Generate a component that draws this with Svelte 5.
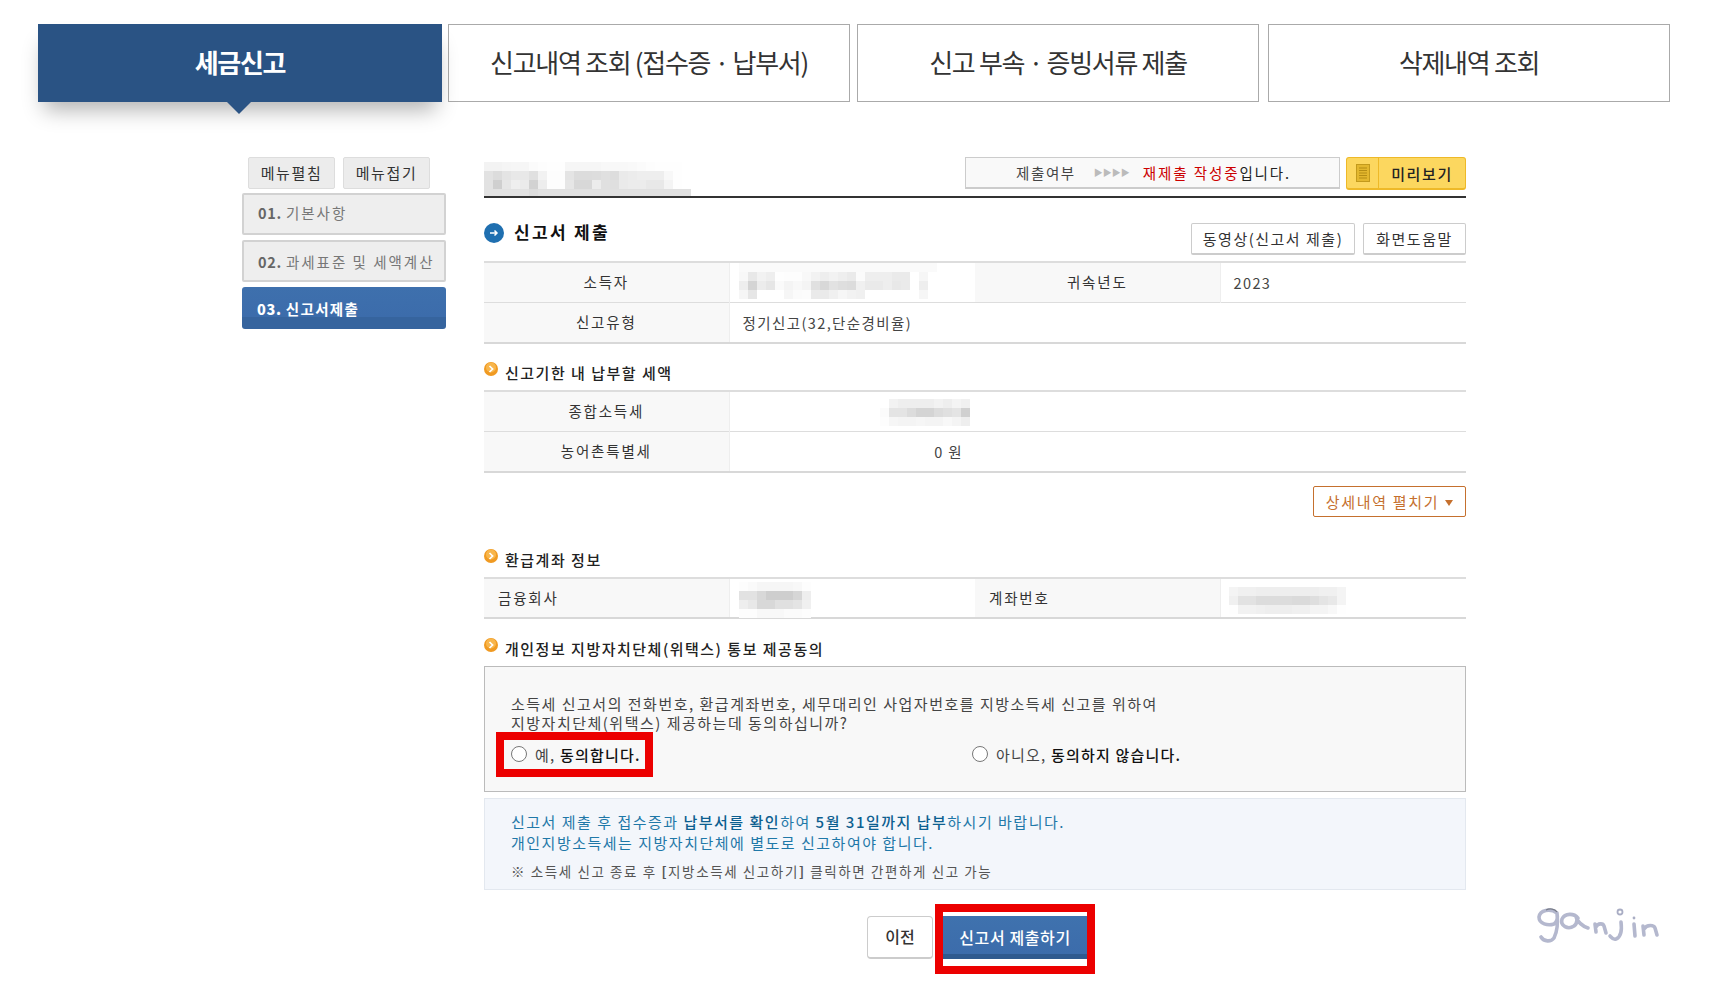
<script>
    const blurs = {
        title: [
            ['f3','f3','f5','f6','f6','fb','fd','fe','fe','f6','f6','f6','f6','f8','f8','f8','f9','fb','fd','fe','fe','fe','ff'],
            ['e2','dc','e4','e8','e8','e0','f2','fd','fd','e4','dc','dc','dd','e0','dd','ea','ec','ee','ee','ee','f8','fe','ff'],
            ['e2','cf','e6','ef','eb','d2','ed','fd','fd','e6','d8','d8','ec','e0','df','ea','ec','ec','e8','e8','f4','fe','ff'],
            ['e2','e2','e2','e2','e2','dc','e0','e0','e0','e0','e0','e0','e0','e0','e0','e0','e0','e0','e0','e0','e0','e0','e0']
        ],
        payer: [
            ['fa','fa','fa','fa','fa','fa','fa','fa','fa','fa','fa','fa','fa','fa','fa','fa','fa','fa','fa','fa','fa','fa'],
            ['f8','e8','f2','ee','fe','fd','fd','f8','f2','ee','f2','ee','ea','fb','ee','ee','ee','ea','ea','ff','f6','ff'],
            ['ee','d4','ec','e6','fa','f4','f8','f4','e0','d8','e2','de','dc','f0','ea','ea','ee','e8','ea','ff','ee','ff'],
            ['f6','e6','ff','ff','ff','f6','fb','fc','ea','ea','f0','f6','f2','f0','ff','ff','ff','ff','ff','ff','f6','ff']
        ],
        tax: [
            ['ff','f2','ee','ee','ee','ee','f2','ee','f4','f0'],
            ['fb','e4','e4','dc','d4','d4','dc','e0','e4','d0'],
            ['fd','f6','f4','f4','f6','f4','f4','f8','f4','ee']
        ],
        bank: [
            ['fd','fa','f6','f6','f6','f6','f8','fd'],
            ['e2','e2','d8','ce','ce','ce','d6','ee'],
            ['ee','e8','d8','d8','e0','e0','e4','f0'],
            ['fd','fd','f8','f8','f8','fb','fb','fd']
        ],
        account: [
            ['f4','f0','f0','ee','ee','ee','ee','ee','ee','ee','f0','f0','f4'],
            ['f0','e2','e2','dc','dc','dc','dc','da','da','de','e4','e8','f4'],
            ['fe','f2','f2','f0','ee','ee','ee','f0','f0','f4','f4','f8','fe']
        ]
    };
</script>

{#snippet mosaic(rows, kind)}
    <div class="mosaic {kind}" aria-hidden="true">
        {#each rows as row}
            <div class="mosaic-row">
                {#each row as g}
                    <i style="background:#{g}{g}{g}"></i>
                {/each}
            </div>
        {/each}
    </div>
{/snippet}

{#snippet bullet()}
    <svg class="bullet" viewBox="0 0 14 14" aria-hidden="true">
        <circle cx="7" cy="7" r="7" fill="#f09a22"/>
        <circle cx="7" cy="5.5" r="5" fill="#f8b64c"/>
        <path d="M5.5 4 L8.6 7 L5.5 10" fill="none" stroke="#fff" stroke-width="1.7"/>
    </svg>
{/snippet}

<main class="page">
    <nav class="tabs">
        <a class="tab active">세금신고</a>
        <a class="tab second">신고내역 조회 (접수증 · 납부서)</a>
        <a class="tab third">신고 부속 · 증빙서류 제출</a>
        <a class="tab fourth">삭제내역 조회</a>
    </nav>

    <div class="layout">
        <aside class="sidebar">
            <div class="menu-btns">
                <button>메뉴펼침</button>
                <button>메뉴접기</button>
            </div>
            <div class="side-item"><b>01.</b> 기본사항</div>
            <div class="side-item"><b>02.</b> 과세표준 및 세액계산</div>
            <div class="side-item current"><b>03.</b> 신고서제출</div>
        </aside>

        <section class="content">
            <div class="top-row">
                {@render mosaic(blurs.title, 'm-title')}
                <div class="status">
                    <span>제출여부</span>
                    <span class="arrows">▶▶▶▶</span>
                    <span class="state"><em>재제출 작성중</em>입니다.</span>
                </div>
                <button class="preview">
                    <span class="preview-icon">
                        <svg viewBox="0 0 14 18" width="14" height="18" aria-hidden="true">
                            <rect x="0.5" y="0.5" width="13" height="17" fill="#e3b72e" stroke="#c39a1c"/>
                            <path d="M3 4h8M3 6.5h8M3 9h8M3 11.5h8M3 14h8" stroke="#b58d14" stroke-width="1"/>
                        </svg>
                    </span>
                    <span class="preview-label">미리보기</span>
                </button>
            </div>

            <div class="main-head">
                <h2>
                    <svg viewBox="0 0 20 20" width="20" height="20" aria-hidden="true">
                        <circle cx="10" cy="10" r="10" fill="#1f6fb0"/>
                        <path d="M6 10h7M10.5 7.5 13 10l-2.500 2.500" fill="none" stroke="#fff" stroke-width="1.500"/>
                    </svg>
                    <span>신고서 제출</span>
                </h2>
                <div class="head-btns">
                    <button class="plain">동영상(신고서 제출)</button>
                    <button class="plain">화면도움말</button>
                </div>
            </div>

            <table>
                <colgroup><col class="c1"/><col class="c2"/><col class="c3"/><col class="c4"/></colgroup>
                <tbody>
                    <tr>
                        <th>소득자</th>
                        <td class="has-blur">{@render mosaic(blurs.payer, 'm-payer')}</td>
                        <th>귀속년도</th>
                        <td>2023</td>
                    </tr>
                    <tr>
                        <th>신고유형</th>
                        <td colspan="3">정기신고(32,단순경비율)</td>
                    </tr>
                </tbody>
            </table>

            <h3 class="sub due">{@render bullet()}<span>신고기한 내 납부할 세액</span></h3>
            <table>
                <colgroup><col class="c1"/><col class="c2"/><col class="c3"/><col class="c4"/></colgroup>
                <tbody>
                    <tr>
                        <th>종합소득세</th>
                        <td class="has-blur">{@render mosaic(blurs.tax, 'm-tax')}</td>
                        <td colspan="2"></td>
                    </tr>
                    <tr>
                        <th>농어촌특별세</th>
                        <td class="amount">0 원</td>
                        <td colspan="2"></td>
                    </tr>
                </tbody>
            </table>

            <div class="detail-row">
                <button class="detail">상세내역 펼치기 <i class="caret"></i></button>
            </div>

            <h3 class="sub refund">{@render bullet()}<span>환급계좌 정보</span></h3>
            <table>
                <colgroup><col class="c1"/><col class="c2"/><col class="c3"/><col class="c4"/></colgroup>
                <tbody>
                    <tr>
                        <th class="left">금융회사</th>
                        <td class="has-blur">{@render mosaic(blurs.bank, 'm-bank')}</td>
                        <th class="left">계좌번호</th>
                        <td class="has-blur">{@render mosaic(blurs.account, 'm-account')}</td>
                    </tr>
                </tbody>
            </table>

            <h3 class="sub agree">{@render bullet()}<span>개인정보 지방자치단체(위택스) 통보 제공동의</span></h3>
            <div class="consent">
                <p>소득세 신고서의 전화번호, 환급계좌번호, 세무대리인 사업자번호를 지방소득세 신고를 위하여<br/>지방자치단체(위택스) 제공하는데 동의하십니까?</p>
                <div class="choices">
                    <label class="choice yes">
                        <input type="radio" name="agree"/>
                        <span>예, <b>동의합니다.</b></span>
                        <i class="red-frame"></i>
                    </label>
                    <label class="choice no">
                        <input type="radio" name="agree"/>
                        <span>아니오, <b>동의하지 않습니다.</b></span>
                    </label>
                </div>
            </div>

            <div class="notice">
                <p class="lead">신고서 제출 후 접수증과 <b>납부서를 확인</b>하여 <b>5월 31일까지 납부</b>하시기 바랍니다.<br/>개인지방소득세는 지방자치단체에 별도로 신고하여야 합니다.</p>
                <p class="small">※ 소득세 신고 종료 후 <b>[</b>지방소득세 신고하기<b>]</b> 클릭하면 간편하게 신고 가능</p>
            </div>

            <div class="actions">
                <button class="prev">이전</button>
                <div class="submit-wrap">
                    <button class="submit">신고서 제출하기</button>
                    <i class="red-frame"></i>
                </div>
            </div>
        </section>
    </div>

    <svg class="watermark" viewBox="0 0 135 55" width="135" height="55" aria-hidden="true">
        <g fill="none" stroke="#b4b8ce" stroke-width="3.600" stroke-linecap="round" stroke-linejoin="round">
            <path d="M27 13C20 8 10 10 9 17C9 24 18 26 24 24C27 22 28 18 27 13C28 22 27 32 24 38C21 42 14 42 11 37"/>
            <path d="M48 18C44 13 35 13 32 19C30 26 38 30 44 26C48 23 47 18 46 17C48 22 52 26 58 28"/>
            <path d="M65 24L66 32M66 27C68 23 73 23 74 26L76 33"/>
            <path d="M91 22C92 30 91 37 86 39C83 40 82 38 80 36"/>
            <path d="M104 24L105 36"/>
            <path d="M113 26L114 35M114 29C117 24 124 25 125 28L127 35"/>
        </g>
        <circle cx="90" cy="12" r="2.500" fill="none" stroke="#a9adc4" stroke-width="1.800"/>
        <circle cx="104" cy="18" r="1.400" fill="#a9adc4"/>
        <path d="M16 10C20 8 25 9 27 12" fill="none" stroke="#777b88" stroke-width="1.200"/>
    </svg>
</main>

<style>
    :global(body) {
        background: #fff;
        font-family: "Noto Sans CJK KR", "Noto Sans", sans-serif;
        color: #333;
    }

    .page {
        position: relative;
        width: 1715px;
        height: 997px;
        padding: 24px 0 0 38px;
        box-sizing: border-box;
        overflow: hidden;
    }

    button {
        font-family: inherit;
        padding: 0;
        cursor: pointer;
    }

    .tabs {
        display: flex;
        height: 78px;
    }

    .tab {
        box-sizing: border-box;
        width: 402px;
        padding-bottom: 4px;
        display: flex;
        align-items: center;
        justify-content: center;
        border: 1px solid #aaa;
        font-size: 26px;
        letter-spacing: -1.300px;
        color: #333;
    }

    .tab.active {
        position: relative;
        width: 404px;
        background: #2a5384;
        border: none;
        color: #fff;
        font-weight: 700;
        box-shadow: 0 14px 20px -6px rgba(0, 0, 0, 0.3);
    }

    .tab.active::after {
        content: "";
        position: absolute;
        left: 189px;
        top: 78px;
        border: 12px solid transparent;
        border-top-color: #2a5384;
        border-bottom: 0;
    }

    .second { margin-left: 6px; }
    .third { margin-left: 7px; }
    .fourth { margin-left: 9px; }

    .layout {
        display: flex;
        margin-top: 55px;
        padding-left: 204px;
    }

    .sidebar {
        width: 204px;
        flex: none;
        margin-right: 38px;
    }

    .menu-btns {
        display: flex;
        gap: 8px;
        padding-left: 6px;
        margin-bottom: 4px;
    }

    .menu-btns button {
        width: 87px;
        height: 32px;
        padding-bottom: 2px;
        background: #ececec;
        border: 1px solid #ddd;
        border-radius: 2px;
        font-size: 15px;
        letter-spacing: 1.600px;
        color: #333;
    }

    .side-item {
        box-sizing: border-box;
        height: 42px;
        margin-bottom: 5px;
        padding-left: 14px;
        display: flex;
        align-items: center;
        gap: 4px;
        background: #eee;
        border: 2px solid #d2d2d2;
        border-radius: 2px;
        font-size: 14.500px;
        letter-spacing: 2px;
        color: #777;
        white-space: nowrap;
    }

    .side-item:nth-child(2) {
        padding-bottom: 3px;
    }

    .side-item b {
        color: #666;
        letter-spacing: 0.7px;
    }

    .side-item.current {
        background: linear-gradient(#3e70ad, #3c6cab 72%, #36649e 72%);
        border: none;
        padding-left: 15px;
        color: #fff;
        font-weight: 700;
        letter-spacing: 1.300px;
        border-radius: 3px;
    }

    .side-item.current b {
        color: #fff;
    }

    .content {
        position: relative;
        width: 982px;
        flex: none;
    }

    .top-row {
        position: relative;
        height: 41px;
        box-sizing: border-box;
        display: flex;
        justify-content: flex-end;
        gap: 6px;
        border-bottom: 2px solid #333;
    }

    .mosaic {
        position: absolute;
    }

    .mosaic-row {
        display: flex;
        height: 9px;
    }

    .mosaic-row i {
        width: 9px;
        flex: none;
    }

    .m-title { left: 0; top: 5px; }
    .m-title .mosaic-row:last-child { height: 7px; }
    .m-payer { left: 9px; top: 0; }
    .m-tax { left: 150px; top: 7px; }
    .m-bank { left: 9px; top: 3px; }
    .m-account { left: 8px; top: 8px; }

    .status {
        box-sizing: border-box;
        width: 375px;
        height: 32px;
        padding-left: 50px;
        display: flex;
        align-items: center;
        background: #f9f9f9;
        border: 1px solid #ccc;
        border-bottom-width: 2px;
        font-size: 14.500px;
        letter-spacing: 1.600px;
        color: #444;
        white-space: nowrap;
    }

    .arrows {
        margin: 0 13px 0 18px;
        font-size: 9px;
        letter-spacing: 0;
        color: #bbb;
    }

    .status em {
        font-style: normal;
        color: #c00;
    }

    .state {
        color: #222;
        letter-spacing: 1.900px;
    }

    .preview {
        width: 120px;
        height: 33px;
        display: flex;
        background: #fcd75f;
        border: 1px solid #eeb928;
        border-bottom-width: 2px;
        border-radius: 3px;
        color: #222;
    }

    .preview-icon {
        width: 31px;
        height: 100%;
        display: flex;
        align-items: center;
        justify-content: center;
        border-right: 1px solid #eeb928;
    }

    .preview-label {
        flex: 1;
        align-self: center;
        font-size: 15px;
        font-weight: 500;
        letter-spacing: 1.600px;
    }

    .main-head {
        display: flex;
        justify-content: space-between;
        margin-top: 25px;
        margin-bottom: 6px;
    }

    h2 {
        margin: 0;
        display: flex;
        gap: 10px;
        height: 20px;
        font-size: 17px;
        font-weight: 700;
        letter-spacing: 2.300px;
        color: #111;
    }

    h2 span {
        line-height: 18px;
    }

    .head-btns {
        display: flex;
        gap: 8px;
    }

    .plain {
        height: 32px;
        padding-bottom: 1px;
        background: #fff;
        border: 1px solid #ccc;
        border-bottom-width: 2px;
        border-radius: 2px;
        font-size: 15px;
        letter-spacing: 1.500px;
        color: #333;
    }

    .plain:first-child { width: 164px; }
    .plain:last-child { width: 103px; }

    table {
        width: 982px;
        table-layout: fixed;
        border-collapse: collapse;
        border-top: 2px solid #ddd;
    }

    .c1 { width: 245px; }
    .c2 { width: 246px; }
    .c3 { width: 245px; }
    .c4 { width: 246px; }

    tr {
        height: 40px;
        border-bottom: 1px solid #ddd;
    }

    tr + tr {
        height: 41px;
    }

    tr:last-child {
        border-bottom: 2px solid #d8d8d8;
    }

    th, td {
        padding: 0;
        font-size: 14.500px;
        font-weight: 400;
        letter-spacing: 1.400px;
        color: #333;
    }

    th {
        padding-bottom: 2px;
        background: #f8f8f8;
        border-right: 1px solid #eee;
        letter-spacing: 1.800px;
    }

    th.left {
        text-align: left;
        padding-left: 14px;
    }

    td {
        padding-left: 13px;
        color: #444;
    }

    .has-blur {
        position: relative;
        padding: 0;
    }

    .amount {
        padding: 0 12px 0 0;
        text-align: right;
    }

    .sub {
        display: flex;
        height: 28px;
        margin: 0;
        gap: 7px;
        font-size: 15px;
        font-weight: 500;
        letter-spacing: 1.500px;
        color: #222;
    }

    .sub.due { margin-top: 18px; }
    .sub.refund { margin-top: 32px; }
    .sub.agree { margin-top: 19px; }

    .sub span {
        line-height: 22px;
    }

    .bullet {
        width: 14px;
        height: 14px;
        flex: none;
    }

    .detail-row {
        display: flex;
        justify-content: flex-end;
        margin-top: 13px;
    }

    .detail {
        box-sizing: border-box;
        width: 153px;
        height: 31px;
        padding-bottom: 1px;
        background: #fff;
        border: 1px solid #c5702e;
        border-radius: 2px;
        font-size: 15px;
        letter-spacing: 1.700px;
        color: #c5702e;
    }

    .caret {
        display: inline-block;
        margin-left: 1px;
        vertical-align: 2px;
        border: 4.500px solid transparent;
        border-top: 6px solid #c5702e;
        border-bottom: 0;
    }

    .consent {
        box-sizing: border-box;
        height: 126px;
        padding: 27px 26px 0;
        background: #f8f8f8;
        border: 1px solid #bbb;
    }

    .consent p {
        margin: 0;
        font-size: 15px;
        line-height: 19px;
        letter-spacing: 1.500px;
        color: #444;
    }

    .choices {
        display: flex;
        margin-top: 10px;
    }

    .choice {
        position: relative;
        display: flex;
        align-items: center;
        gap: 8px;
        height: 24px;
        font-size: 15px;
        letter-spacing: 1.200px;
        color: #444;
        white-space: nowrap;
    }

    .choice.yes {
        width: 461px;
    }

    .choice b {
        font-weight: 500;
        color: #111;
    }

    input[type="radio"] {
        appearance: none;
        width: 16px;
        height: 16px;
        margin: 0;
        background: #fff;
        border: 1.500px solid #777;
        border-radius: 50%;
    }

    .red-frame {
        position: absolute;
        box-sizing: border-box;
        border: 8px solid #ec0000;
        pointer-events: none;
    }

    .yes .red-frame {
        left: -15px;
        top: -10px;
        width: 157px;
        height: 45px;
    }

    .notice {
        box-sizing: border-box;
        height: 92px;
        margin-top: 6px;
        padding: 12px 26px 0;
        background: #f3f6fb;
        border: 1px solid #e3e8ef;
    }

    .notice p {
        margin: 0;
    }

    .lead {
        font-size: 15px;
        line-height: 21px;
        letter-spacing: 1.500px;
        color: #1f78a8;
    }

    .lead b {
        font-weight: 500;
        color: #0d5f90;
    }

    .notice .small {
        margin-top: 8px;
        font-size: 13.500px;
        line-height: 20px;
        letter-spacing: 1.600px;
        color: #555;
    }

    .actions {
        display: flex;
        justify-content: center;
        gap: 10px;
        margin: 26px 0 0 4px;
    }

    .prev {
        width: 66px;
        height: 43px;
        padding-bottom: 2px;
        background: #fff;
        border: 1px solid #ccc;
        border-bottom-width: 2px;
        border-radius: 4px;
        font-size: 16px;
        font-weight: 500;
        color: #333;
    }

    .submit-wrap {
        position: relative;
    }

    .submit {
        display: block;
        width: 144px;
        height: 43px;
        padding-bottom: 2px;
        background: linear-gradient(#3f72ae, #3c6cab 88%, #2f5a8f 88%);
        border: none;
        font-size: 16px;
        font-weight: 500;
        letter-spacing: 0.6px;
        color: #fff;
    }

    .submit-wrap .red-frame {
        inset: -12px -8px -15px;
    }

    .watermark {
        position: absolute;
        left: 1530px;
        top: 900px;
    }
</style>
